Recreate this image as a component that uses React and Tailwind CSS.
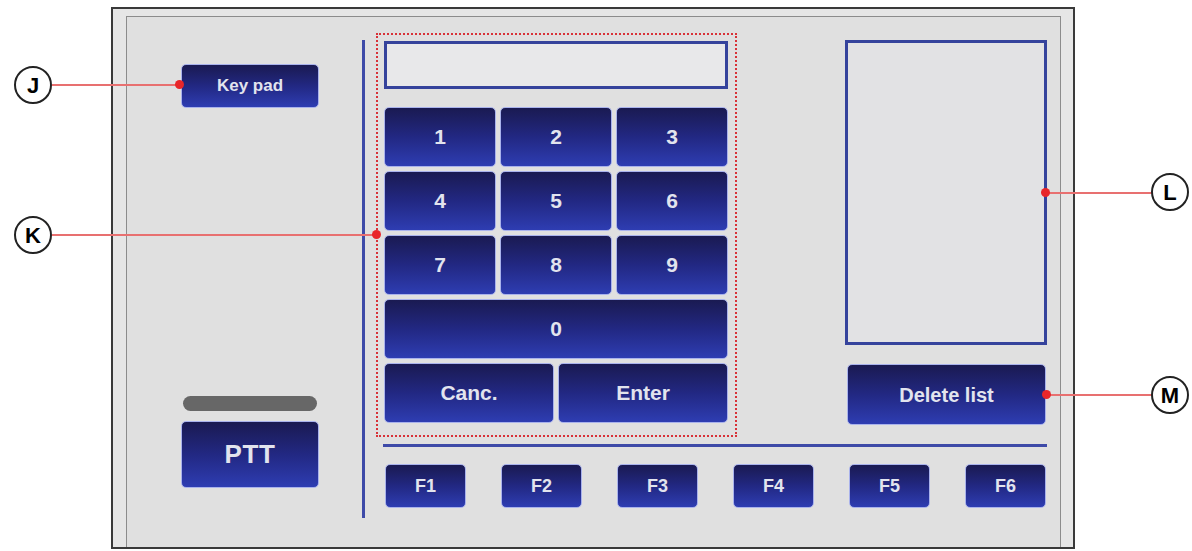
import React from 'react';

const btn =
  "flex items-center justify-center rounded-[5px] border border-[#a9b2ec] bg-gradient-to-b from-[#1a1a52] via-[#222883] to-[#2e3db2] text-[#e2e4ee] font-bold";

function Key({ label, className = "" }) {
  return <div className={`${btn} text-[21px] ${className}`}>{label}</div>;
}

function Callout({ letter, className }) {
  return (
    <div
      className={`absolute w-[38px] h-[38px] rounded-full border-2 border-[#222] bg-white flex items-center justify-center text-[22px] font-bold text-black ${className}`}
    >
      {letter}
    </div>
  );
}

function Leader({ className }) {
  return <div className={`absolute h-[2px] bg-[#e87070] ${className}`} />;
}

function Dot({ className }) {
  return <div className={`absolute w-[9px] h-[9px] rounded-full bg-[#e8262a] ${className}`} />;
}

export default function App() {
  const keys = ["1", "2", "3", "4", "5", "6", "7", "8", "9"];
  const fkeys = ["F1", "F2", "F3", "F4", "F5", "F6"];

  return (
    <div className="relative w-[1192px] h-[551px] bg-white overflow-hidden" style={{ fontFamily: '"Liberation Sans", Arial, sans-serif' }}>
      {/* Device frame */}
      <div className="ml-[111px] pt-[7px]">
        <div className="w-[964px] h-[542px] border-2 border-[#3a3a3a] bg-[#e6e6e6] pl-[13px] pt-[7px]">
          <div className="w-[935px] h-[531px] border-l border-r border-t border-[#8c8c8c] bg-[#e0e0e0] flex">
            {/* Left column */}
            <div className="w-[235px] flex flex-col pl-[54px] pt-[47px]">
              <div className={`${btn} w-[138px] h-[44px] text-[17px]`}>Key pad</div>
              <div className="mt-[288px] w-[134px] h-[15px] ml-[2px] rounded-full bg-[#676767]" />
              <div className={`${btn} mt-[10px] w-[138px] h-[67px] text-[26px] tracking-wide`}>PTT</div>
            </div>

            {/* Vertical divider */}
            <div className="mt-[23px] w-[3px] h-[478px] bg-[#3e4aa8]" />

            {/* Right area */}
            <div className="flex flex-col pt-[16px]">
              <div className="flex">
                {/* Keypad (K) */}
                <div className="ml-[11px] w-[361px] h-[404px] border-2 border-dotted border-[#d83238] pl-[6px] pr-[7px] pt-[6px]">
                  <div className="h-[48px] border-[3px] border-[#35439c] bg-[#e8e8ea]" />
                  <div className="mt-[18px] grid grid-cols-3 gap-[4px]">
                    {keys.map((k) => (
                      <Key key={k} label={k} className="h-[60px]" />
                    ))}
                    <Key label="0" className="col-span-3 h-[60px]" />
                  </div>
                  <div className="mt-[4px] grid grid-cols-2 gap-[4px]">
                    <Key label="Canc." className="h-[60px]" />
                    <Key label="Enter" className="h-[60px]" />
                  </div>
                </div>

                {/* List (L) + Delete list (M) */}
                <div className="ml-[108px] flex flex-col">
                  <div className="mt-[7px] w-[202px] h-[305px] border-[3px] border-[#35439c] bg-[#e2e2e4]" />
                  <div className={`${btn} mt-[19px] ml-[2px] w-[199px] h-[61px] text-[20px]`}>Delete list</div>
                </div>
              </div>

              <div className="mt-[7px] ml-[18px] w-[664px] h-[3px] bg-[#3e4aa8]" />

              <div className="mt-[17px] ml-[20px] w-[661px] flex justify-between">
                {fkeys.map((f) => (
                  <div key={f} className={`${btn} w-[81px] h-[44px] text-[18px]`}>{f}</div>
                ))}
              </div>
            </div>
          </div>
        </div>
      </div>

      {/* Callouts */}
      <Leader className="left-[52px] top-[84px] w-[128px]" />
      <Dot className="left-[175px] top-[80px]" />
      <Callout letter="J" className="left-[14px] top-[66px]" />

      <Leader className="left-[52px] top-[234px] w-[324px]" />
      <Dot className="left-[372px] top-[230px]" />
      <Callout letter="K" className="left-[14px] top-[216px]" />

      <Leader className="left-[1045px] top-[192px] w-[108px]" />
      <Dot className="left-[1041px] top-[188px]" />
      <Callout letter="L" className="left-[1151px] top-[173px]" />

      <Leader className="left-[1046px] top-[394px] w-[107px]" />
      <Dot className="left-[1042px] top-[390px]" />
      <Callout letter="M" className="left-[1151px] top-[376px]" />
    </div>
  );
}
